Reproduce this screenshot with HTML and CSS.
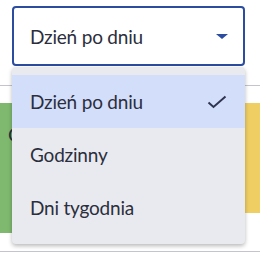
FILE: index.html
```html
<!DOCTYPE html>
<html>
<head>
  <title>Widok</title>
  <link rel="stylesheet" href="styles.css">
</head>
<body>
  <div class="page">
    <div class="field">
      <span class="field-value">Dzień po dniu</span>
      <span class="caret"></span>
    </div>

    <div class="divider"></div>

    <div class="cards">
      <div class="card card-green"><span class="card-title">Godzinny</span></div>
      <div class="card card-yellow"></div>
    </div>

    <div class="divider divider-bottom"></div>

    <ul class="menu">
      <li class="menu-item selected">
        <span>Dzień po dniu</span>
        <svg class="check" width="20" height="14" viewBox="0 0 20 14">
          <path d="M1.5 7.5 L6.5 12 L18.5 1.5" fill="none" stroke="#2f3550" stroke-width="2"/>
        </svg>
      </li>
      <li class="menu-item">Godzinny</li>
      <li class="menu-item">Dni tygodnia</li>
    </ul>
  </div>
</body>
</html>
```

FILE: styles.css
```css
body {
  margin: 0;
  font-family: Lato, "Noto Sans", sans-serif;
  color: #2b2e3c;
  background: #fff;
}

.page {
  position: relative;
  width: 260px;
  height: 261px;
  overflow: hidden;
}

.field {
  display: flex;
  align-items: center;
  justify-content: space-between;
  height: 56px;
  margin: 6px 15px 0 12px;
  padding: 0 15px 0 16px;
  border: 2px solid #2b4c9f;
  border-radius: 4px;
  font-size: 19px;
  letter-spacing: -0.2px;
}

.caret {
  width: 0;
  height: 0;
  border-left: 6px solid transparent;
  border-right: 6px solid transparent;
  border-top: 5px solid #2b4c9f;
}

.divider {
  height: 1px;
  margin-top: 19px;
  background: #c4c4cc;
}

.cards {
  display: flex;
  gap: 20px;
  margin-top: 17px;
}

.card {
  height: 110px;
}

.card-green {
  flex: 1;
  margin-left: -20px;
  padding: 20px 0 0 28px;
  background: #7fb96f;
}

.card-title {
  font-size: 19px;
}

.card-yellow {
  flex: 1;
  margin-right: -20px;
  background: #efce63;
}

.divider-bottom {
  margin-top: 18px;
}

.menu {
  position: absolute;
  top: 67px;
  left: 12px;
  width: 233px;
  margin: 0;
  padding: 8px 0 10px;
  list-style: none;
  background: #e9eaf0;
  border-radius: 4px;
  box-shadow: 0 2px 4px rgba(0, 0, 0, 0.28);
}

.menu-item {
  display: flex;
  align-items: center;
  justify-content: space-between;
  height: 53px;
  padding: 0 18px 0 18px;
  font-size: 19px;
  letter-spacing: -0.2px;
}

.menu-item.selected {
  background: #d3defb;
}
```
